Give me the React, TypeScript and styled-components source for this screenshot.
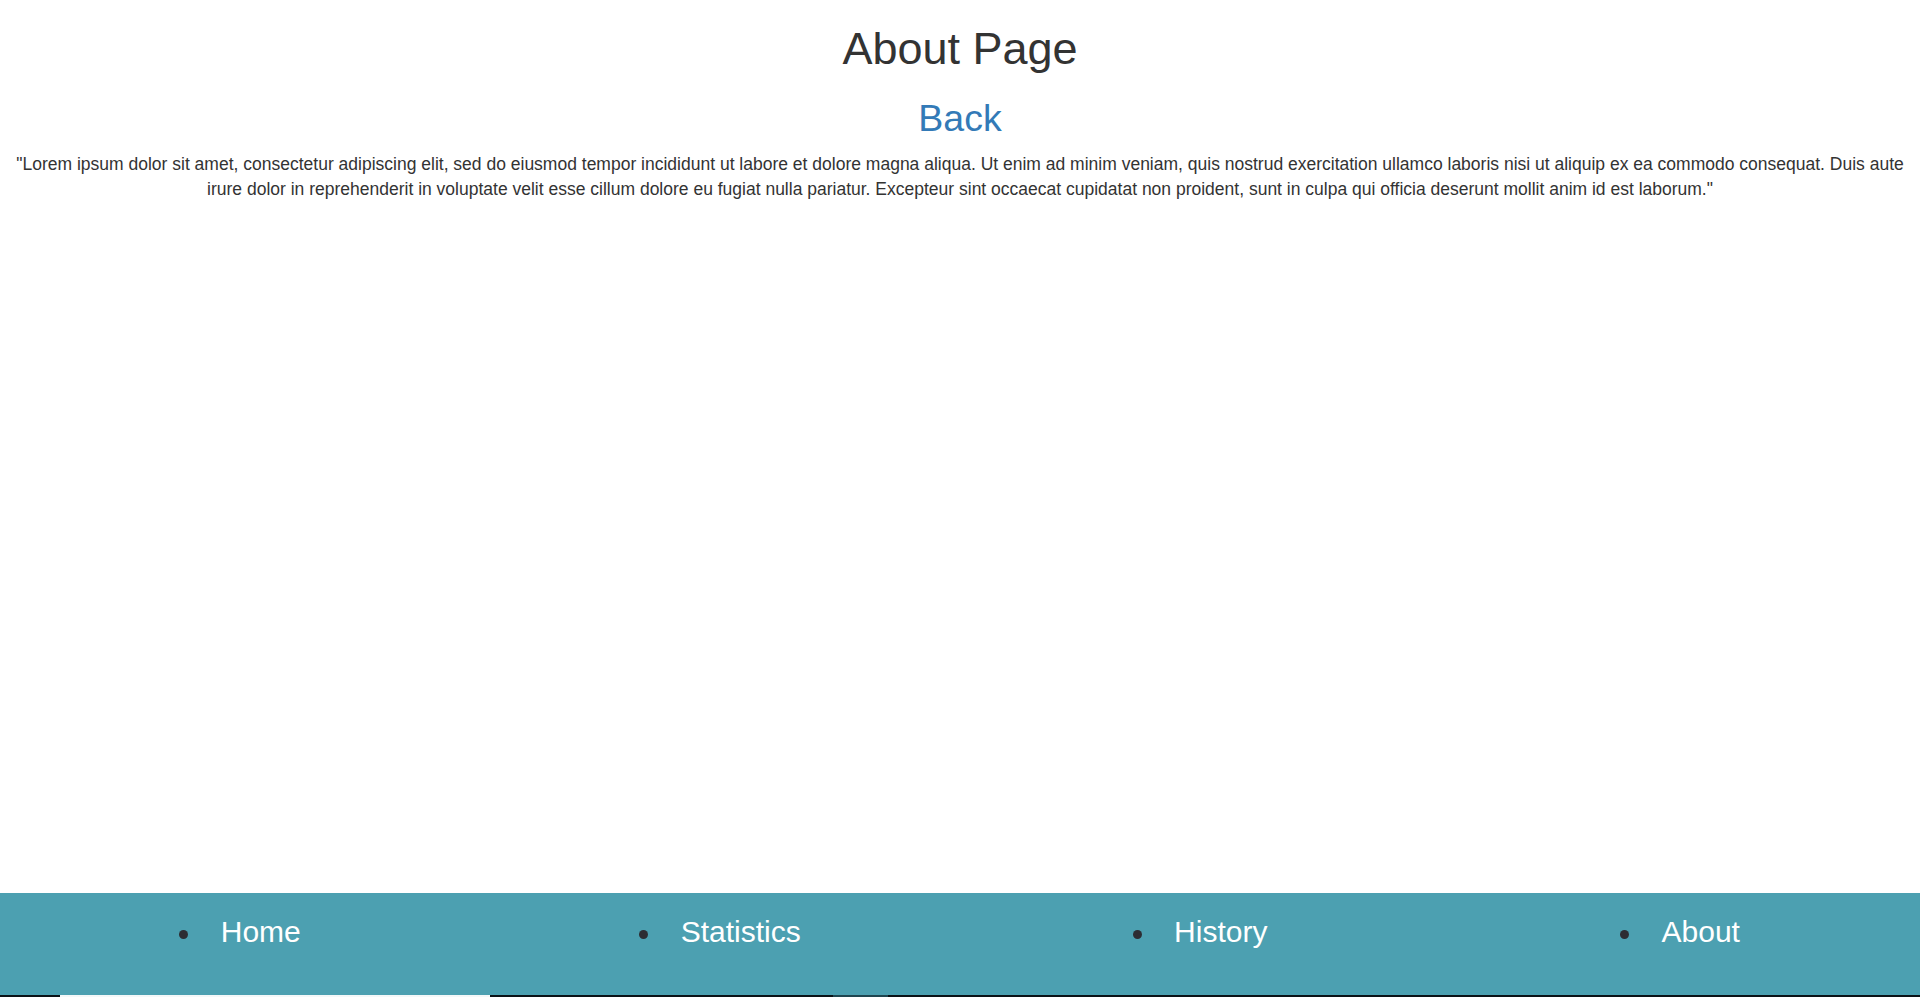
import * as React from 'react'
import styled, { createGlobalStyle } from 'styled-components'

const GlobalStyle = createGlobalStyle`
	html, body {
		margin: 0;
		padding: 0;
	}
	body {
		font-family: "Liberation Sans", Arial, Helvetica, sans-serif;
		font-size: 17.5px;
		line-height: 1.42857;
		color: #333;
		background: #fff;
	}
	* {
		box-sizing: border-box;
	}
`

const links = ['Home', 'Statistics', 'History', 'About']

const App: React.FC = () => {
	return (
		<>
			<GlobalStyle />
			<Page>
				{/* Page content */}
				<Main>
					<Title>About Page</Title>
					<BackHeading>
						<BackLink href="#">Back</BackLink>
					</BackHeading>
					<Text>
						"Lorem ipsum dolor sit amet, consectetur adipiscing elit, sed do eiusmod tempor incididunt ut labore et dolore magna aliqua. Ut enim ad minim veniam, quis nostrud exercitation ullamco laboris nisi ut aliquip ex ea commodo consequat. Duis aute irure dolor in reprehenderit in voluptate velit esse cillum dolore eu fugiat nulla pariatur. Excepteur sint occaecat cupidatat non proident, sunt in culpa qui officia deserunt mollit anim id est laborum."
					</Text>
				</Main>

				{/* Bottom navigation */}
				<Footer>
					<NavList>
						{links.map((link) => (
							<NavItem key={link}>
								<NavLink href="#">{link}</NavLink>
							</NavItem>
						))}
					</NavList>
				</Footer>
				<Strip>
					<Segment $left={60} $width={430} $color="#f4f8f9" />
					<Segment $left={343} $width={55} $color="#1f4650" />
				</Strip>
			</Page>
		</>
	)
}

export default App

const Page = styled.div`
	min-height: 100vh;
	display: flex;
	flex-direction: column;
`

const Main = styled.main`
	flex: 1;
	padding: 0 6px;
	text-align: center;
`

const Title = styled.h1`
	margin: 24px 0 12.5px;
	font-size: 45px;
	font-weight: 500;
	line-height: 1.1;
	color: #333;
`

const BackHeading = styled.h2`
	margin: 24.5px 0 12.5px;
	font-size: 37.5px;
	font-weight: 500;
	line-height: 1.1;
`

const BackLink = styled.a`
	color: #337ab7;
	text-decoration: none;
`

const Text = styled.p`
	margin: 0 0 12.5px;
	font-size: 17.5px;
	line-height: 25px;
`

const Footer = styled.footer`
	height: 102px;
	background: #4ca0b1;
	padding-top: 18px;
`

const NavList = styled.ul`
	display: flex;
	margin: 0;
	padding: 0;
	list-style: none;
`

const NavItem = styled.li`
	flex: 0 0 25%;
	text-align: center;
	font-size: 30px;
	line-height: 1.42857;
	&::before {
		content: '';
		display: inline-block;
		width: 9px;
		height: 9px;
		margin-right: 32.5px;
		border-radius: 50%;
		background: #2d2d33;
		vertical-align: middle;
	}
`

const NavLink = styled.a`
	color: #fff;
	text-decoration: none;
`

const Strip = styled.div`
	display: flex;
	height: 2px;
	background: #0b1217;
`

const Segment = styled.div<{ $left: number, $width: number, $color: string }>`
	margin-left: ${(p) => p.$left}px;
	width: ${(p) => p.$width}px;
	background: ${(p) => p.$color};
`
